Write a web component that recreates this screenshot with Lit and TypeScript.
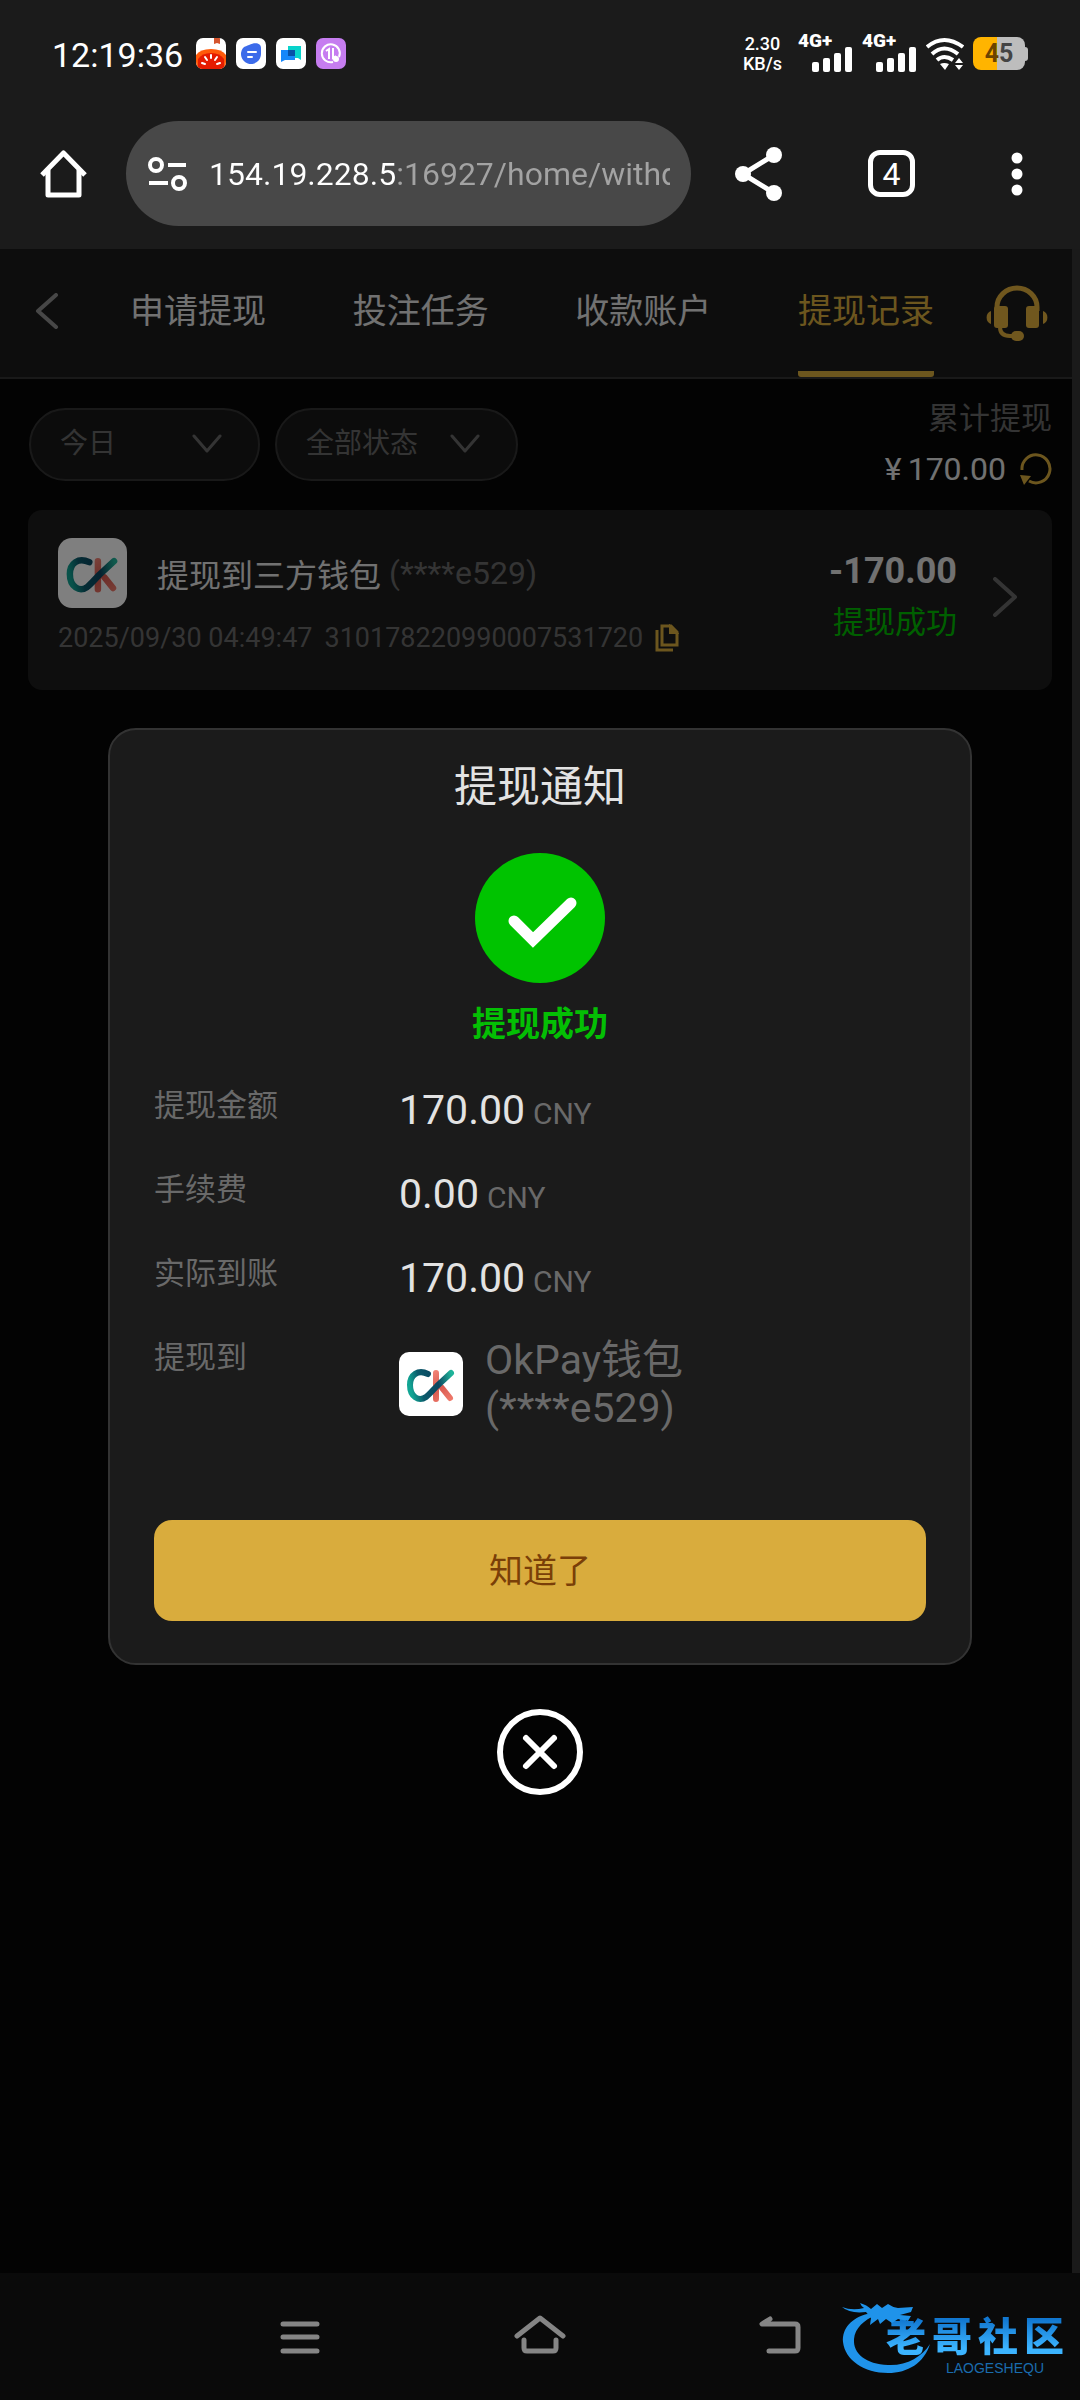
import { LitElement, html, svg, css } from "lit";
import { customElement, property } from "lit/decorators.js";

interface Amount {
  label: string;
  value: string;
}

const AMOUNTS: Amount[] = [
  { label: "提现金额", value: "170.00" },
  { label: "手续费", value: "0.00" },
  { label: "实际到账", value: "170.00" },
];

const TABS = ["申请提现", "投注任务", "收款账户", "提现记录"];

const resetStyles = css`
  * {
    box-sizing: border-box;
  }
  button,
  select,
  input {
    margin: 0;
    padding: 0;
    border: 0;
    background: none;
    color: inherit;
    font: inherit;
    outline: none;
  }
  button,
  select {
    cursor: pointer;
  }
  button {
    display: flex;
    align-items: center;
    justify-content: center;
  }
  a {
    color: inherit;
    text-decoration: none;
  }
  svg {
    display: block;
    flex: none;
  }
`;

@customElement("wallet-logo")
export class WalletLogo extends LitElement {
  static styles = css`
    :host {
      display: block;
      flex: none;
      overflow: hidden;
      background: #fff;
    }
    svg {
      display: block;
      width: 100%;
      height: 100%;
    }
  `;

  render() {
    return html`<svg viewBox="0 0 64 64" fill="none" stroke-linecap="round" stroke-linejoin="round" aria-hidden="true">
      <defs>
        <linearGradient id="loop" gradientUnits="userSpaceOnUse" x1="10" y1="30" x2="52" y2="20">
          <stop offset="0" stop-color="#12a594" />
          <stop offset="0.25" stop-color="#0b5a6b" />
          <stop offset="0.65" stop-color="#0c4560" />
          <stop offset="1" stop-color="#1fb49a" />
        </linearGradient>
        <linearGradient id="leg" gradientUnits="userSpaceOnUse" x1="36" y1="20" x2="52" y2="48">
          <stop offset="0" stop-color="#f08073" />
          <stop offset="0.5" stop-color="#d85a50" />
          <stop offset="1" stop-color="#f07a6b" />
        </linearGradient>
      </defs>
      <path d="M37 21V47M43 36L51 46" stroke="url(#leg)" stroke-width="6" />
      <path d="M29 22C19 17 11 23 11 33C11 45 20 50 27 45C31 42 34 38 38 34L52 21" stroke="url(#loop)" stroke-width="6" />
    </svg>`;
  }
}

@customElement("status-bar")
export class StatusBar extends LitElement {
  static styles = [
    resetStyles,
    css`
      :host {
        display: flex;
        align-items: center;
        justify-content: space-between;
        height: 107px;
        padding: 0 52px;
        color: #fff;
      }
      .left,
      .right,
      .apps {
        display: flex;
        align-items: center;
      }
      .left {
        gap: 13px;
      }
      .time {
        font-size: 34px;
        line-height: 40px;
        padding-top: 2px;
      }
      .apps {
        gap: 10px;
      }
      .right {
        gap: 9px;
      }
      .speed {
        font-size: 18px;
        line-height: 20px;
        text-align: center;
        font-weight: 500;
        margin-right: 7px;
      }
      .signal {
        display: flex;
        flex-direction: column;
        width: 55px;
      }
      .net {
        font-size: 19px;
        line-height: 12px;
        font-weight: 900;
      }
      .bars {
        align-self: flex-end;
      }
      .battery {
        display: flex;
        align-items: center;
      }
      .cell {
        width: 52px;
        height: 33px;
        border-radius: 8px;
        background: linear-gradient(90deg, #ffb400 46%, #bdbdbd 46%);
        font-size: 25px;
        line-height: 33px;
        font-weight: 700;
        text-align: center;
        color: #444;
      }
      .low {
        color: #6b4400;
      }
      .tip {
        width: 3px;
        height: 14px;
        border-radius: 0 3px 3px 0;
        background: #bdbdbd;
      }
    `,
  ];

  private signal() {
    return html`<div class="signal">
      <span class="net">4G+</span>
      <svg class="bars" width="41" height="25" viewBox="0 0 41 25" fill="#fff" aria-hidden="true">
        <rect x="0" y="15" width="7" height="10" rx="2" />
        <rect x="11" y="11" width="7" height="14" rx="2" />
        <rect x="22" y="6" width="7" height="19" rx="2" />
        <rect x="33" y="0" width="7" height="25" rx="2" />
      </svg>
    </div>`;
  }

  render() {
    return html`
      <div class="left">
        <span class="time">12:19:36</span>
        <div class="apps">
          <svg width="30" height="31" viewBox="0 0 30 31" aria-hidden="true">
            <defs><clipPath id="tile"><rect width="30" height="31" rx="7" /></clipPath></defs>
            <g clip-path="url(#tile)">
              <rect width="30" height="31" fill="#fff" />
              <path d="M18 0h6v6l-3-1-3 1z" fill="#d4552f" />
              <path d="M0 17Q4 11 15 11T30 17V31H0z" fill="#ff5a0a" />
              <path d="M2 21Q6 15 15 15T28 21V31H2z" fill="#e51c00" />
              <path d="M15 17v3M9 19l2 3M21 19l-2 3M6 25l3 1M24 25l-3 1" stroke="#fff" stroke-width="2" stroke-linecap="round" />
            </g>
          </svg>
          <svg width="30" height="31" viewBox="0 0 30 31" aria-hidden="true">
            <rect width="30" height="31" rx="7" fill="#fff" />
            <path d="M13 7C19 4 25 5 25 10V16A10 10 0 1 1 7 10C9 8 11 8 13 7z" fill="#3c6bea" />
            <path d="M12 14h8M12 19h4" stroke="#fff" stroke-width="2" stroke-linecap="round" />
          </svg>
          <svg width="30" height="31" viewBox="0 0 30 31" aria-hidden="true">
            <rect width="30" height="31" rx="7" fill="#fff" />
            <path d="M12 8h13v14l-3-2H12z" fill="#08d3cb" />
            <path d="M5 12h14v10H9l-4 2z" fill="#1687fa" />
            <path d="M12 12h7v6h-7z" fill="#0751a8" />
          </svg>
          <svg width="30" height="31" viewBox="0 0 30 31" fill="none" aria-hidden="true">
            <rect width="30" height="31" rx="7" fill="#c67df0" />
            <path d="M23 19A9 9 0 1 0 17 24" stroke="#fff" stroke-width="2" />
            <path d="M10 13l3-2v10M17 10v10l3-2" stroke="#fff" stroke-width="2" />
            <circle cx="20" cy="21" r="3" fill="#fff" />
          </svg>
        </div>
      </div>
      <div class="right">
        <div class="speed">2.30<br />KB/s</div>
        ${this.signal()} ${this.signal()}
        <svg width="38" height="34" viewBox="0 0 38 34" fill="none" stroke="#fff" stroke-width="4" aria-hidden="true">
          <path d="M1 10Q18-4 37 10M6 17Q18 6 32 17M11 23Q18 17 27 23" />
          <path d="M14 27Q18 25 23 27L19 33z" fill="#fff" stroke="none" />
          <path d="M29 26l4-5 4 5zM29 28h8l-4 5z" fill="#fff" stroke="none" />
        </svg>
        <div class="battery">
          <div class="cell"><span class="low">4</span>5</div>
          <div class="tip"></div>
        </div>
      </div>
    `;
  }
}

@customElement("browser-bar")
export class BrowserBar extends LitElement {
  static styles = [
    resetStyles,
    css`
      :host {
        display: flex;
        align-items: center;
        padding: 14px 47px 23px 40px;
        color: #fff;
      }
      .address {
        flex: 1;
        min-width: 0;
        display: flex;
        align-items: center;
        gap: 21px;
        height: 105px;
        margin: 0 44px 0 39px;
        padding: 0 21px 0 22px;
        border-radius: 53px;
        background: #484848;
      }
      .url {
        flex: 1;
        min-width: 0;
        font-size: 32px;
        height: 48px;
        color: transparent;
        background: linear-gradient(90deg, #fff 187px, #a3a3a3 187px);
        -webkit-background-clip: text;
        background-clip: text;
      }
      .actions {
        display: flex;
        align-items: center;
        gap: 86px;
      }
      .tabs {
        width: 47px;
        height: 47px;
        border: 5px solid #fff;
        border-radius: 12px;
        font-size: 32px;
        line-height: 36px;
      }
      .menu {
        width: 32px;
        height: 48px;
      }
    `,
  ];

  render() {
    return html`
      <button aria-label="主页">
        <svg width="47" height="50" viewBox="0 0 47 50" fill="none" stroke="#fff" stroke-width="5" stroke-linejoin="round" aria-hidden="true">
          <path d="M2 26L23.500 4L45 26" stroke-linecap="butt" />
          <path d="M8 21V46H39V21" />
        </svg>
      </button>
      <label class="address">
        <svg width="40" height="34" viewBox="0 0 40 34" fill="none" stroke="#fff" stroke-width="4" aria-hidden="true">
          <circle cx="8" cy="8" r="6" />
          <path d="M20 8h18M1 26h19" />
          <circle cx="31" cy="26" r="6" />
        </svg>
        <input class="url" type="text" aria-label="网址" value="154.19.228.5:16927/home/withdraw" />
      </label>
      <div class="actions">
        <button aria-label="分享">
          <svg width="47" height="54" viewBox="0 0 47 54" fill="#fff" aria-hidden="true">
            <path d="M39 8L8 27L39 46" fill="none" stroke="#fff" stroke-width="5" />
            <circle cx="39" cy="8" r="8" />
            <circle cx="8" cy="27" r="8" />
            <circle cx="39" cy="46" r="8" />
          </svg>
        </button>
        <button class="tabs" aria-label="标签页">4</button>
        <button class="menu" aria-label="更多">
          <svg width="12" height="44" viewBox="0 0 12 44" fill="#fff" aria-hidden="true">
            <circle cx="6" cy="6" r="5.500" />
            <circle cx="6" cy="22" r="5.500" />
            <circle cx="6" cy="38" r="5.500" />
          </svg>
        </button>
      </div>
    `;
  }
}

@customElement("withdraw-page")
export class WithdrawPage extends LitElement {
  static styles = [
    resetStyles,
    css`
      :host {
        display: block;
        height: 100%;
        background: #060606;
        color: #e3e3e3;
      }
      .header {
        display: flex;
        align-items: stretch;
        height: 130px;
        padding: 0 24px 0 31px;
        background: #1b1b1b;
        border-bottom: 2px solid #333;
      }
      .back {
        width: 32px;
        padding-bottom: 4px;
      }
      .tabs {
        flex: 1;
        display: flex;
        justify-content: space-between;
        margin: 0 52px 0 67px;
        font-size: 34px;
      }
      .tab {
        display: flex;
        align-items: center;
        padding-bottom: 10px;
      }
      .tab.active {
        color: #d9ac3d;
        background: linear-gradient(#d9ac3d, #d9ac3d) bottom / 100% 6px no-repeat;
        border-radius: 3px;
      }
      .tools {
        display: flex;
        align-items: center;
        justify-content: space-between;
        padding: 18px 20px 0 29px;
      }
      .filters {
        display: flex;
        gap: 15px;
      }
      .filter {
        display: grid;
        align-items: center;
        color: #696969;
      }
      .filter select {
        grid-area: 1 / 1;
        appearance: none;
        height: 73px;
        padding: 0 90px 2px 29px;
        border: 2px solid #333;
        border-radius: 37px;
        background: #191919;
        font-size: 28px;
      }
      .filter svg {
        grid-area: 1 / 1;
        justify-self: end;
        margin-right: 38px;
        pointer-events: none;
      }
      .day {
        width: 231px;
      }
      .state {
        width: 243px;
      }
      .total {
        display: flex;
        flex-direction: column;
        align-items: flex-end;
        gap: 6px;
        line-height: 44px;
      }
      .caption {
        color: #696969;
        font-size: 31px;
      }
      .sum {
        display: flex;
        align-items: center;
        gap: 14px;
        font-size: 32px;
      }
      .sum b {
        font-weight: 400;
        display: flex;
        gap: 6px;
      }
      .record {
        display: flex;
        align-items: center;
        margin: 19px 20px 0 28px;
        padding: 28px 34px 34px 30px;
        height: 180px;
        border-radius: 14px;
        background: #1c1c1c;
      }
      .info {
        flex: 1;
        min-width: 0;
        display: flex;
        flex-direction: column;
        gap: 12px;
      }
      .title {
        display: flex;
        align-items: center;
        font-size: 32px;
      }
      .title wallet-logo {
        width: 69px;
        height: 70px;
        border-radius: 14px;
        margin-right: 30px;
      }
      .account {
        color: #696969;
        margin-left: 8px;
      }
      .meta {
        display: flex;
        align-items: center;
        gap: 12px;
        color: #696969;
        font-size: 27px;
        line-height: 36px;
      }
      .result {
        display: flex;
        flex-direction: column;
        align-items: flex-end;
        gap: 8px;
        margin-right: 35px;
        line-height: 44px;
      }
      .amount {
        font-size: 36px;
        font-weight: 700;
      }
      .ok {
        color: #00bf00;
        font-size: 31px;
      }
    `,
  ];

  private chevron() {
    return svg`<svg width="30" height="20" viewBox="0 0 30 20" fill="none" stroke="#696969" stroke-width="3" stroke-linecap="round" stroke-linejoin="round" aria-hidden="true"><path d="M2 2L15 17L28 2"/></svg>`;
  }

  render() {
    return html`
      <header class="header">
        <button class="back" aria-label="返回">
          <svg width="24" height="36" viewBox="0 0 24 36" fill="none" stroke="#8f8f8f" stroke-width="4" stroke-linecap="round" stroke-linejoin="round" aria-hidden="true">
            <path d="M21 2L3 18L21 34" />
          </svg>
        </button>
        <nav class="tabs">
          ${TABS.map((t, i) => html`<a class="tab ${i === 3 ? "active" : ""}" href="#">${t}</a>`)}
        </nav>
        <button aria-label="客服">
          <svg width="62" height="56" viewBox="0 0 62 56" fill="#e0ae3c" aria-hidden="true">
            <path d="M11 26V22A20 19 0 0 1 51 22V26" fill="none" stroke="#e0ae3c" stroke-width="5" />
            <rect x="8" y="21" width="14" height="22" rx="3" />
            <rect x="40" y="21" width="13" height="22" rx="3" />
            <path d="M5 26v13A7 7 0 0 1 5 26zM57 26v13A7 7 0 0 0 57 26z" />
            <path d="M14 42Q14 51 24 51H30" fill="none" stroke="#e0ae3c" stroke-width="4" />
            <rect x="25" y="46" width="13" height="10" rx="5" />
          </svg>
        </button>
      </header>
      <section class="tools">
        <div class="filters">
          <label class="filter">
            <select class="day" aria-label="日期"><option>今日</option></select>
            ${this.chevron()}
          </label>
          <label class="filter">
            <select class="state" aria-label="状态"><option>全部状态</option></select>
            ${this.chevron()}
          </label>
        </div>
        <div class="total">
          <span class="caption">累计提现</span>
          <div class="sum">
            <b><span>¥</span><span>170.00</span></b>
            <button aria-label="刷新">
              <svg width="32" height="34" viewBox="0 0 32 34" fill="none" stroke="#d9ac3d" stroke-width="3" aria-hidden="true">
                <path d="M2 18A14 14 0 1 1 9 29" />
                <path d="M0 23L11 24L4 33z" fill="#d9ac3d" stroke="none" />
              </svg>
            </button>
          </div>
        </div>
      </section>
      <article class="record">
        <div class="info">
          <div class="title">
            <wallet-logo></wallet-logo>
            <span>提现到三方钱包</span>
            <span class="account">(****e529)</span>
          </div>
          <div class="meta">
            <time>2025/09/30 04:49:47</time>
            <span>310178220990007531720</span>
            <button aria-label="复制">
              <svg width="24" height="28" viewBox="0 0 24 28" fill="none" stroke="#d9ac3d" stroke-width="3" aria-hidden="true">
                <path d="M7 2H16L22 8V21H7z" />
                <path d="M15 2V9H22z" fill="#d9ac3d" stroke-width="2" />
                <path d="M2 6V26H18" />
              </svg>
            </button>
          </div>
        </div>
        <div class="result">
          <span class="amount">-170.00</span>
          <span class="ok">提现成功</span>
        </div>
        <svg width="26" height="40" viewBox="0 0 26 40" fill="none" stroke="#696969" stroke-width="4" stroke-linecap="round" stroke-linejoin="round" aria-hidden="true">
          <path d="M3 2L23 20L3 38" />
        </svg>
      </article>
    `;
  }
}

@customElement("withdraw-dialog")
export class WithdrawDialog extends LitElement {
  @property({ attribute: false }) amounts: Amount[] = [];

  static styles = [
    resetStyles,
    css`
      :host {
        display: flex;
        flex-direction: column;
        align-items: center;
        justify-content: center;
        gap: 44px;
      }
      .card {
        width: 80%;
        padding: 27px 44px 42px;
        border: 2px solid #333;
        border-radius: 28px;
        background: #1b1b1b;
        display: flex;
        flex-direction: column;
      }
      .heading {
        margin: 0 0 36px;
        text-align: center;
        color: #e3e3e3;
        font-size: 43px;
        line-height: 60px;
        font-weight: 400;
      }
      .mark {
        align-self: center;
      }
      .status {
        margin: 19px 0 38px;
        text-align: center;
        color: #04bf04;
        font-size: 34px;
        line-height: 44px;
        font-weight: 700;
      }
      .rows {
        display: grid;
        grid-template-columns: 245px 1fr;
        row-gap: 28px;
        margin: 0 0 88px;
        color: #696969;
      }
      dt {
        font-size: 31px;
        line-height: 44px;
      }
      dd {
        margin: 0;
        display: flex;
        align-items: baseline;
        gap: 8px;
        font-size: 30px;
        line-height: 52px;
      }
      .value {
        color: #e3e3e3;
        font-size: 41px;
      }
      .wallet {
        align-items: center;
        gap: 22px;
        font-size: 41px;
        line-height: 48px;
      }
      .wallet wallet-logo {
        width: 64px;
        height: 64px;
        border-radius: 10px;
      }
      .wallet span {
        display: block;
      }
      .confirm {
        height: 101px;
        padding-bottom: 4px;
        border-radius: 18px;
        background: #d9ac3d;
        color: #7a3f08;
        font-size: 34px;
      }
    `,
  ];

  render() {
    return html`
      <section class="card" role="dialog" aria-labelledby="heading">
        <h1 class="heading" id="heading">提现通知</h1>
        <svg class="mark" width="130" height="130" viewBox="0 0 130 130" aria-hidden="true">
          <circle cx="65" cy="65" r="65" fill="#00c300" />
          <path d="M39 68L58 87L96 50" fill="none" stroke="#fff" stroke-width="11" stroke-linecap="round" stroke-linejoin="miter" />
        </svg>
        <p class="status">提现成功</p>
        <dl class="rows">
          ${this.amounts.map(
            (a) => html`<dt>${a.label}</dt>
              <dd><span class="value">${a.value}</span><span>CNY</span></dd>`,
          )}
          <dt>提现到</dt>
          <dd class="wallet">
            <wallet-logo></wallet-logo>
            <div><span>OkPay钱包</span><span>(****e529)</span></div>
          </dd>
        </dl>
        <button class="confirm">知道了</button>
      </section>
      <button aria-label="关闭">
        <svg width="86" height="86" viewBox="0 0 86 86" fill="none" stroke="#fff" stroke-width="6" stroke-linecap="round" aria-hidden="true">
          <circle cx="43" cy="43" r="40" />
          <path d="M29 29L57 57M57 29L29 57" />
        </svg>
      </button>
    `;
  }
}

@customElement("system-nav")
export class SystemNav extends LitElement {
  static styles = [
    resetStyles,
    css`
      :host {
        position: relative;
        display: flex;
        align-items: center;
        justify-content: center;
        gap: 184px;
        height: 127px;
        background: #0a0a0a;
      }
      button {
        width: 56px;
        height: 56px;
      }
      .mark {
        position: absolute;
        right: 16px;
        bottom: 22px;
        width: 224px;
        height: 80px;
        color: #1f93ea;
      }
      .mark svg {
        position: absolute;
        inset: 0;
      }
      .words {
        display: flex;
        flex-direction: column;
        align-items: flex-end;
        padding-top: 12px;
      }
      .name {
        display: flex;
        gap: 6px;
        font-family: "Noto Sans CJK SC", sans-serif;
        font-size: 40px;
        line-height: 48px;
        font-weight: 900;
        color: transparent;
        background: linear-gradient(#1177d0 20%, #3cb4ff 80%);
        -webkit-background-clip: text;
        background-clip: text;
      }
      .latin {
        padding-right: 20px;
        font-family: "Liberation Sans", sans-serif;
        font-size: 14px;
        line-height: 20px;
        color: #1a6cae;
      }
    `,
  ];

  render() {
    return html`
      <button aria-label="最近任务">
        <svg width="40" height="34" viewBox="0 0 40 34" stroke="#858585" stroke-width="5" stroke-linecap="round" aria-hidden="true">
          <path d="M3 4H37M3 17H37M3 31H37" />
        </svg>
      </button>
      <button aria-label="主屏幕">
        <svg width="52" height="44" viewBox="0 0 52 44" fill="none" stroke="#858585" stroke-width="5" stroke-linecap="round" stroke-linejoin="round" aria-hidden="true">
          <path d="M3 21L26 3L49 21M10 25V33Q10 36 13 36H39Q42 36 42 33V25" />
        </svg>
      </button>
      <button aria-label="返回">
        <svg width="44" height="44" viewBox="0 0 44 44" fill="none" stroke="#858585" stroke-width="5" stroke-linecap="round" stroke-linejoin="round" aria-hidden="true">
          <path d="M12 4L4 9H37Q40 9 40 12V33Q40 36 37 36H11" />
        </svg>
      </button>
      <div class="mark">
        <svg width="104" height="80" viewBox="0 0 104 80" fill="#1f93ea" aria-hidden="true">
          <path d="M27 16C12 20 2 30 3 44C5 62 24 75 48 75C68 75 84 65 90 46C82 59 66 68 48 67C26 66 13 56 14 41C15 30 24 22 36 17z" />
          <path d="M2 9Q12 13 24 10Q21 8 20 5Q27 7 31 11L37 6L42 10L48 6Q52 9 58 10L73 9L71 14L60 17L71 18L68 23L58 21L52 25L46 21L40 26L38 21L30 27L31 20L26 14Q10 16 2 9z" />
        </svg>
        <div class="words">
          <div class="name"><span>老</span><span>哥</span><span>社</span><span>区</span></div>
          <span class="latin">LAOGESHEQU</span>
        </div>
      </div>
    `;
  }
}

@customElement("app-root")
export class AppRoot extends LitElement {
  static styles = css`
    :host {
      display: flex;
      flex-direction: column;
      min-height: 100vh;
      background: #1b1b1b;
      font-family: Roboto, "Noto Sans CJK SC", sans-serif;
    }
    .stage {
      position: relative;
      flex: 1;
      display: grid;
      padding-right: 8px;
      background: #343434;
    }
    .dialog {
      position: absolute;
      inset: 0;
      background: rgba(0, 0, 0, 0.5);
    }
  `;

  render() {
    return html`
      <status-bar></status-bar>
      <browser-bar></browser-bar>
      <main class="stage">
        <withdraw-page></withdraw-page>
        <withdraw-dialog class="dialog" .amounts=${AMOUNTS}></withdraw-dialog>
      </main>
      <system-nav></system-nav>
    `;
  }
}
